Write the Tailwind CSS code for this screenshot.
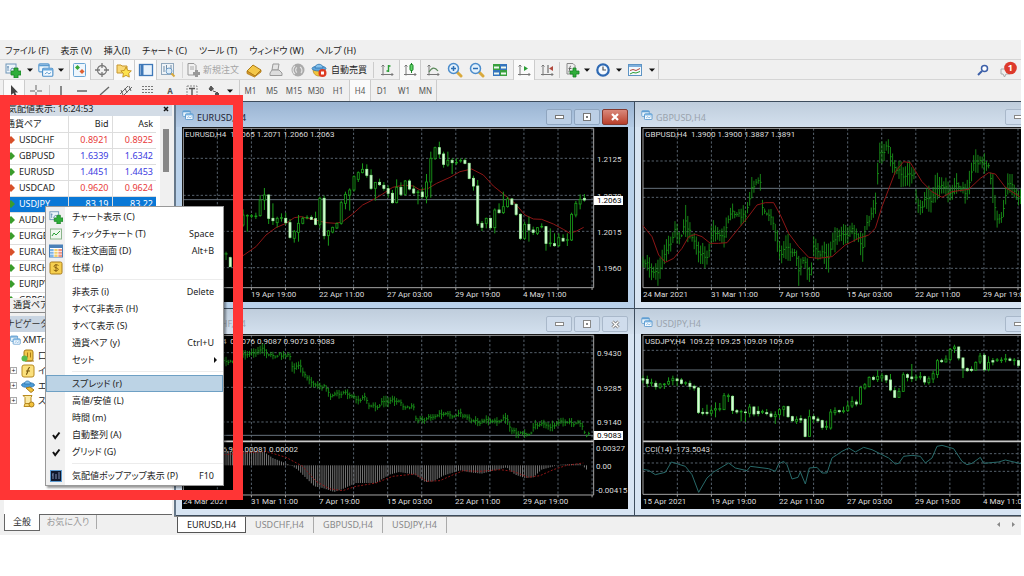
<!DOCTYPE html>
<html lang="ja">
<head>
    <meta charset="UTF-8">
    <meta name="viewport" content="width=device-width, initial-scale=1.0">
    <title>MetaTrader</title>
    <script src="https://cdn.jsdelivr.net/npm/@tailwindcss/browser@4"></script>
</head>
<body class="bg-white font-['Noto_Sans','Noto_Sans_CJK_JP',sans-serif] text-[9px] leading-3 text-[#222] [font-feature-settings:'palt'] overflow-hidden">

    <!-- Shared icons -->
    <svg class="hidden">
        <symbol id="i-win" viewBox="0 0 14 12"><rect x=".7" y=".7" width="9" height="7" rx="1" fill="#eaf5fd" stroke="#5b9bd0"/><path d="M1 2h9" stroke="#5b9bd0" stroke-width="1.5"/><rect x="4" y="4.500" width="9" height="7" rx="1" fill="#f4faff" stroke="#4b8fc8"/><path d="M4 5.700h9" stroke="#6aaade" stroke-width="1.500"/><path d="M6 9.500l2-1.500 1.500 1.500 2-1.500" fill="none" stroke="#5b9bd0" stroke-width=".8"/></symbol>
        <symbol id="i-chartplus" viewBox="0 0 16 16"><rect x="1" y="2" width="10" height="9" fill="#edf5fb" stroke="#6e95b7"/><path d="M3 4v5M2 5h2M5 9l2-3 2 1" fill="none" stroke="#6e95b7"/><path d="M9 6h4v3h3v4h-3v3H9v-3H6V9h3z" fill="#2fae3a" stroke="#188024" stroke-width=".8"/></symbol>
        <symbol id="i-bulb" viewBox="0 0 8 8"><path d="M4 0l4 4-4 4-4-4z"/></symbol>
        <symbol id="i-check" viewBox="0 0 10 10"><path d="M2 5l2.200 3L8.500 2.500" fill="none" stroke="#111" stroke-width="2"/></symbol>
        <symbol id="i-axis" viewBox="0 0 16 16"><path d="M4 3v10.500M2.500 4.500L4 3l1.500 1.500M2 12.500h12M12.500 11l1.500 1.500-1.500 1.500" fill="none" stroke="#777"/></symbol>
        <symbol id="i-down" viewBox="0 0 6 4"><path d="M0 .5h6L3 3.800z" fill="#111"/></symbol>
        <symbol id="i-lens" viewBox="0 0 16 16"><path d="M10 10l4 4" stroke="#d9a93c" stroke-width="3" stroke-linecap="round"/><circle cx="6.500" cy="6.500" r="5" fill="#e3f1fc" stroke="#4b8ccb" stroke-width="1.500"/></symbol>
    </svg>

    <div class="relative mt-10 mr-[3px] bg-[#f0f0f0]">

        <!-- Menu bar -->
        <nav class="flex h-[19px] items-center gap-[12px] pl-[5px] pt-[2px] whitespace-nowrap">
            <button>ファイル (F)</button>
            <button>表示 (V)</button>
            <button>挿入(I)</button>
            <button>チャート (C)</button>
            <button>ツール (T)</button>
            <button>ウィンドウ (W)</button>
            <button>ヘルプ (H)</button>
        </nav>

        <!-- Standard toolbar -->
        <div class="flex h-[21px] items-center border-y border-[#d5d5d5] pl-[2px] whitespace-nowrap">
            <button aria-label="新規チャート" class="flex w-[22px] justify-center"><svg class="size-4"><use href="#i-chartplus"/></svg></button>
            <span class="flex w-[11px] justify-center"><svg class="h-1 w-[6px]"><use href="#i-down"/></svg></span>
            <button aria-label="表示グループ" class="flex w-[22px] justify-center"><svg class="h-[14px] w-4"><use href="#i-win"/></svg></button>
            <span class="mr-[3px] flex w-[8px] justify-center"><svg class="h-1 w-[6px]"><use href="#i-down"/></svg></span>
            <button aria-label="気配値表示" class="flex h-5 w-[22px] items-center justify-center border-x border-[#ccc] bg-[#fafafa] ml-[1px]">
                <svg class="size-4" viewBox="0 0 16 16"><rect x="1.500" y="1.500" width="12" height="13" rx="1" fill="#eef6fc" stroke="#6aa5d4"/><path d="M5.500 3L8 5.500 5.500 8 3 5.500z" fill="#38a838"/><path d="M10 7l2.500 2.500L10 12 7.500 9.500z" fill="#e06030"/></svg>
            </button>
            <button aria-label="データウィンドウ" class="flex w-[22px] justify-center">
                <svg class="size-4" viewBox="0 0 16 16"><circle cx="8" cy="8" r="4.500" fill="none" stroke="#777" stroke-width="1.300"/><path d="M8 1v5M8 10v5M1 8h5M10 8h5" stroke="#777" stroke-width="1.300"/></svg>
            </button>
            <button aria-label="ナビゲーター" class="flex h-5 w-[22px] items-center justify-center border-x border-[#ccc] bg-[#fafafa]">
                <svg class="size-4" viewBox="0 0 16 16"><path d="M1 3h4l1 1h5v7H1z" fill="#f9d978" stroke="#c7962f"/><path d="M10 5l1.700 3.400 3.600.5-2.600 2.500.6 3.700-3.300-1.700-3.200 1.700.6-3.700L4.800 8.900l3.600-.5z" fill="#fde24d" stroke="#c28e1c" stroke-width=".9"/></svg>
            </button>
            <button aria-label="ターミナル" class="flex h-5 w-[22px] items-center justify-center border-r border-[#ccc] bg-[#fafafa]">
                <svg class="size-4" viewBox="0 0 16 16"><rect x="1.500" y="2.500" width="13" height="11" fill="#e9f3fc" stroke="#3e78b8" stroke-width="1.300"/><path d="M4 3v10" stroke="#3e78b8" stroke-width="3"/></svg>
            </button>
            <button aria-label="ストラテジーテスター" class="flex w-[22px] justify-center">
                <svg class="size-4" viewBox="0 0 16 16"><rect x="1.500" y="1.500" width="12" height="11" fill="#eef3f7" stroke="#91a8bd"/><path d="M4 4v6M6.500 3v5M11 3v4" stroke="#6f8ba6"/><path d="M11 11l3.500 3.500" stroke="#d9a93c" stroke-width="2"/><circle cx="9" cy="9" r="3" fill="#dcecf8" stroke="#6f9cc6"/></svg>
            </button>
            <button disabled class="ml-[3px] flex w-[61px] items-center border-l border-[#d5d5d5] pl-[2px] text-[#a5a5a5]">
                <svg class="mr-[2px] size-4" viewBox="0 0 16 16"><path d="M3 1.500h6l2 2V13H3z" fill="#f1f1f1" stroke="#999"/><path d="M5 5h4M5 7h4" stroke="#aaa"/><path d="M10 8h3v2h2v3h-2v2h-3v-2H8v-3h2z" fill="#999"/></svg>
                新規注文
            </button>
            <button aria-label="メタエディター" class="flex w-[22px] justify-center">
                <svg class="size-4" viewBox="0 0 16 16"><path d="M1 9l6-6 8 5-6 6z" fill="#f3c749" stroke="#ad7a14"/><path d="M1 9v2.500L8.500 15 15 10V8l-6 6z" fill="#d8982a" stroke="#ad7a14" stroke-width=".8"/></svg>
            </button>
            <button aria-label="アカウント" class="flex w-[22px] justify-center">
                <svg class="size-4" viewBox="0 0 16 16"><path d="M5 2h6l-1 6H4z" fill="#e5e5e5" stroke="#999"/><path d="M2 13.500V11l2-3h7l3 3v2.500z" fill="#ddd" stroke="#999"/></svg>
            </button>
            <button aria-label="シグナル" class="flex w-[22px] justify-center">
                <svg class="size-4" viewBox="0 0 16 16"><circle cx="8" cy="8" r="6.500" fill="#aaa"/><path d="M5 12a5 5 0 010-8M7 10.500a3 3 0 010-5M10 5a4 4 0 011 6" fill="none" stroke="#e5e5e5" stroke-width="1.200"/></svg>
            </button>
            <button class="flex w-[63px] items-center">
                <svg class="ml-[2px] mr-[4px] size-4 shrink-0" viewBox="0 0 16 16"><path d="M2 7c0 5 3 7 6 7s6-3 6-7z" fill="#f1c53c" stroke="#b98c1d" stroke-width=".8"/><ellipse cx="8" cy="6.500" rx="7" ry="2.500" fill="#5ea6dc" stroke="#2f74ae" stroke-width=".8"/><path d="M4 6c0-5 8-5 8 0z" fill="#84c1ec" stroke="#2f74ae" stroke-width=".8"/><circle cx="11.500" cy="11" r="4" fill="#dd3a22"/><rect x="10" y="9.500" width="3" height="3" fill="#fff"/></svg>
                自動売買
            </button>
            <button aria-label="バーチャート" class="ml-[1px] flex w-[26px] justify-center border-l border-[#ccc]">
                <svg class="size-4" viewBox="0 0 16 16"><use href="#i-axis"/><path d="M9.500 3v7M9.500 4h2M7.500 9h2" stroke="#2a9e35" stroke-width="1.400"/></svg>
            </button>
            <button aria-label="ローソク足" class="flex h-5 w-[22px] items-center justify-center border-x border-[#ccc] bg-[#fafafa]">
                <svg class="size-4" viewBox="0 0 16 16"><use href="#i-axis"/><path d="M9.500 1v10" stroke="#178524"/><rect x="8" y="2.500" width="3" height="6" rx="1" fill="#62d56a" stroke="#178524"/></svg>
            </button>
            <button aria-label="ラインチャート" class="flex w-[23px] justify-center">
                <svg class="size-4" viewBox="0 0 16 16"><use href="#i-axis"/><path d="M4 10c3-5 6-5 9-1" fill="none" stroke="#5c8a5c" stroke-width="1.200"/></svg>
            </button>
            <button aria-label="拡大" class="flex w-[22px] justify-center">
                <svg class="size-4" viewBox="0 0 16 16"><use href="#i-lens"/><path d="M4 6.500h5M6.500 4v5" stroke="#2c6fb4" stroke-width="1.500"/></svg>
            </button>
            <button aria-label="縮小" class="flex w-[22px] justify-center">
                <svg class="size-4" viewBox="0 0 16 16"><use href="#i-lens"/><path d="M4 6.500h5" stroke="#2c6fb4" stroke-width="1.500"/></svg>
            </button>
            <button aria-label="ウィンドウの整列" class="flex w-[23px] justify-center">
                <svg class="size-4" viewBox="0 0 16 16"><rect x="1" y="2" width="7" height="6" fill="#38a03e"/><rect x="8" y="2" width="7" height="6" fill="#3474bd"/><rect x="1" y="8" width="7" height="6" fill="#3474bd"/><rect x="8" y="8" width="7" height="6" fill="#38a03e"/><path d="M2 4.500h5v2H2zM9 4.500h5v2H9zM2 10.500h5v2H2zM9 10.500h5v2H9z" fill="#eef7ee"/></svg>
            </button>
            <button aria-label="自動スクロール" class="ml-[2px] flex h-5 w-[22px] items-center justify-center border-x border-[#ccc] bg-[#fafafa]">
                <svg class="size-4" viewBox="0 0 16 16"><use href="#i-axis"/><path d="M8 4l4 2.500L8 9z" fill="#2a9e35"/></svg>
            </button>
            <button aria-label="チャートシフト" class="flex w-[24px] justify-center">
                <svg class="size-4" viewBox="0 0 16 16"><use href="#i-axis"/><path d="M9 3v8" stroke="#555"/><path d="M14 4v5l-4-2.500z" fill="#b0483c"/></svg>
            </button>
            <button aria-label="インディケータ" class="flex w-[24px] justify-center border-l border-[#ccc]">
                <svg class="size-4" viewBox="0 0 16 16"><path d="M3 1.500h6l2 2V12H3z" fill="#eee" stroke="#888"/><path d="M7 4c-2 0-1 6-2.500 6M4.500 6.500h3" fill="none" stroke="#666"/><path d="M9 6h3v3h3v3h-3v3H9v-3H6V9h3z" fill="#2fae3a" stroke="#188024" stroke-width=".8"/></svg>
            </button>
            <span class="flex w-[8px] justify-center"><svg class="h-1 w-[6px]"><use href="#i-down"/></svg></span>
            <button aria-label="時間足" class="flex w-[24px] justify-center">
                <svg class="size-4" viewBox="0 0 16 16"><circle cx="8" cy="8" r="5.700" fill="#f5faff" stroke="#2e69b3" stroke-width="2.200"/><path d="M8 4.500V8h3" fill="none" stroke="#555" stroke-width="1.200"/></svg>
            </button>
            <span class="flex w-[8px] justify-center"><svg class="h-1 w-[6px]"><use href="#i-down"/></svg></span>
            <button aria-label="テンプレート" class="flex w-[24px] justify-center">
                <svg class="size-4" viewBox="0 0 16 16"><rect x="1.500" y="2.500" width="13" height="11" fill="#f4f9fd" stroke="#5d93c4"/><path d="M2 4h12" stroke="#7fb0dc" stroke-width="2"/><path d="M3 8.500l3-1 3 1 4-2" fill="none" stroke="#b0483c"/><path d="M3 12l3-1.500 3 .5 4-1.500" fill="none" stroke="#2a9e35"/></svg>
            </button>
            <span class="flex h-full w-[12px] items-center border-r border-[#ccc] pl-[2px]"><svg class="h-1 w-[6px]"><use href="#i-down"/></svg></span>
            <button aria-label="検索" class="ml-auto flex">
                <svg class="size-3" viewBox="0 0 12 12"><path d="M5 7l-4 4" stroke="#3c5fa8" stroke-width="2"/><circle cx="7.500" cy="4.500" r="3" fill="#fff" stroke="#3c5fa8" stroke-width="1.500"/></svg>
            </button>
            <button aria-label="通知" class="relative ml-[9px] mr-[4px] flex">
                <svg class="h-[18px] w-[19px]" viewBox="0 0 19 18"><path d="M3 8h9v5H8l-1.500 3L5 13H3z" fill="#eee" stroke="#aaa"/><circle cx="12.500" cy="7" r="6.300" fill="#dd3a2c"/></svg>
                <span class="absolute right-[4px] top-[1px] text-[9px] font-bold text-white">1</span>
            </button>
        </div>

        <!-- Line studies and periods -->
        <div class="flex h-[21px] items-center pl-[3px] font-['Noto_Sans'] text-[8px] text-[#555]">
            <button aria-label="カーソル" class="flex h-full w-[22px] items-center justify-center border-x border-[#ccc] bg-[#fafafa]"><svg class="size-3" viewBox="0 0 12 12"><path d="M3 0v10l2.500-2L7 12l2-1-2-3.500h3z" fill="#444"/></svg></button>
            <button aria-label="クロスヘア" class="flex w-[22px] justify-center"><svg class="size-3" viewBox="0 0 12 12"><path d="M6 0v5M6 7v5M0 6h5M7 6h5" stroke="#666"/></svg></button>
            <button aria-label="垂直線" class="ml-[2px] flex w-[22px] justify-center border-l border-[#ccc]"><svg class="size-3" viewBox="0 0 12 12"><path d="M6 1v10" stroke="#666" stroke-width="1.500"/></svg></button>
            <button aria-label="水平線" class="flex w-[22px] justify-center"><svg class="size-3" viewBox="0 0 12 12"><path d="M1 6h10" stroke="#666" stroke-width="1.500"/></svg></button>
            <button aria-label="トレンドライン" class="flex w-[22px] justify-center"><svg class="size-3" viewBox="0 0 12 12"><path d="M2 10l9-8" stroke="#666" stroke-width="1.300"/></svg></button>
            <button aria-label="チャネル" class="flex w-[22px] justify-center"><svg class="size-3" viewBox="0 0 12 12"><path d="M0 9l8-8M3 11l9-9M1 5l2 5M5 3l2 5M9 1l2 5" stroke="#666"/></svg></button>
            <button aria-label="フィボナッチ" class="flex w-[22px] justify-center"><svg class="size-3" viewBox="0 0 12 12"><path d="M0 1.500h12M0 4.500h12M0 7.500h12M0 10.500h12" stroke="#777" stroke-dasharray="2 1"/></svg></button>
            <button class="w-[22px] font-bold">A</button>
            <button aria-label="ラベル" class="flex w-[22px] justify-center"><svg class="size-3" viewBox="0 0 12 12"><rect x="1" y="1" width="10" height="10" fill="none" stroke="#888" stroke-dasharray="2 1"/><path d="M3 3.500h6M6 3.500V10" stroke="#555" stroke-width="1.400"/></svg></button>
            <button aria-label="矢印" class="flex w-[22px] justify-center"><svg class="size-3" viewBox="0 0 12 12"><path d="M3 1l2.500 3L3 6 1 4zM9 7l2 2-2 2-2-2zM5 6l3 1" fill="#555" stroke="#555"/></svg></button>
            <span class="flex w-[9px] justify-center"><svg class="h-1 w-[6px]"><use href="#i-down"/></svg></span>
            <button class="ml-[5px] h-full w-[22px] border-l border-[#ccc]">M1</button>
            <button class="w-[22px]">M5</button>
            <button class="w-[22px]">M15</button>
            <button class="w-[22px]">M30</button>
            <button class="w-[22px]">H1</button>
            <button class="h-full w-[22px] border-x border-[#ccc] bg-[#fafafa]">H4</button>
            <button class="w-[22px]">D1</button>
            <button class="w-[22px]">W1</button>
            <button class="h-full w-[22px] border-r border-[#ccc]">MN</button>
        </div>

        <div class="flex">
            <!-- Left column -->
            <aside class="ml-[4px] flex w-[168px] shrink-0 flex-col">
                <div class="flex h-[15px] items-center justify-between bg-[#d3dce6] pl-[4px] pr-[3px]">
                    <span>気配値表示: 16:24:53</span>
                    <button aria-label="閉じる" class="flex"><svg class="size-[6px]" viewBox="0 0 6 6"><path d="M1 1l4 4M5 1L1 5" stroke="#111" stroke-width="1.500"/></svg></button>
                </div>
                <div class="flex h-[182px] overflow-hidden bg-white">
                    <table class="w-[152px] table-fixed self-start border-collapse text-right">
                        <colgroup><col class="w-[64px]"><col class="w-[44px]"><col class="w-[44px]"></colgroup>
                        <thead>
                            <tr class="h-4 border-b border-[#ddd]"><th class="border-r border-[#ddd] pl-[2px] text-left font-normal">通貨ペア</th><th class="border-r border-[#ddd] pr-[3px] font-normal">Bid</th><th class="pr-[3px] font-normal">Ask</th></tr>
                        </thead>
                        <tbody id="quotes"></tbody>
                    </table>
                    <div class="ml-auto w-[12px] bg-[#f0f0f0] px-[3px] pt-[13px]"><div class="h-[43px] w-[6px] bg-[#888]"></div></div>
                </div>
                <div class="flex h-[15px] items-center border-b border-[#888] pl-[9px]"><button>通貨ペア</button></div>
                <div class="mt-[3px] flex h-4 items-center bg-[#c9d5e2] pl-[2px] text-[#333]">ナビゲーター</div>
                <ul class="grow bg-white pl-[6px]">
                    <li class="flex h-4 items-center"><svg class="mr-[2px] h-3 w-[11px]" viewBox="0 0 14 12"><use href="#i-win"/></svg>XMTrading</li>
                    <li class="flex h-[15px] items-center pl-[11px]"><svg class="mr-[3px] size-[14px]" viewBox="0 0 14 14"><rect x="3" y="1" width="9" height="11" rx="2" fill="#f2c84c" stroke="#a87a18"/><path d="M6.500 3.500v5M9.500 3.500v5M4 12h9" stroke="#a87a18"/><circle cx="3.500" cy="9.500" r="3" fill="#57bb4e"/></svg>口座</li>
                    <li class="flex h-[15px] items-center"><span class="mr-[2px] flex h-[7px] w-[7px] items-center justify-center border border-[#aaa] text-[7px]">+</span><svg class="ml-[2px] mr-[3px] size-[14px]" viewBox="0 0 14 14"><rect x="1" y="1" width="12" height="12" rx="2" fill="#fbe07c" stroke="#b88a20"/><path d="M9 3.500C6 3 7.500 10 5 10.500M5 7h4" fill="none" stroke="#7a5a10" stroke-width="1.200"/></svg>インディケータ</li>
                    <li class="flex h-[15px] items-center"><span class="mr-[2px] flex h-[7px] w-[7px] items-center justify-center border border-[#aaa] text-[7px]">+</span><svg class="ml-[2px] mr-[3px] size-[14px]" viewBox="0 0 14 14"><ellipse cx="7" cy="6" rx="6.500" ry="2.500" fill="#4b9bd6" stroke="#2f74ae" stroke-width=".8"/><path d="M3.500 5c0-4 6-4 6 0z" fill="#7fbdea" stroke="#2f74ae" stroke-width=".8"/><path d="M5 9l4-1 4 3-3 2.500z" fill="#f2c23c" stroke="#a87a18"/></svg>エキスパート</li>
                    <li class="flex h-[15px] items-center"><span class="mr-[2px] flex h-[7px] w-[7px] items-center justify-center border border-[#aaa] text-[7px]">+</span><svg class="ml-[2px] mr-[3px] size-[14px]" viewBox="0 0 14 14"><path d="M2 1.500h9l-1 2v6H4v-6z" fill="#fbe9a4" stroke="#b88a20"/><path d="M4 9.500h5v3H3z" fill="#f6d56c" stroke="#b88a20"/><circle cx="10.500" cy="10.500" r="2.500" fill="#f2c23c" stroke="#a87a18"/></svg>スクリプト</li>
                </ul>
                <div class="flex h-[21px] items-start">
                    <button class="h-[17px] w-[36px] border-x border-b border-[#666] bg-white">全般</button>
                    <div class="h-[17px] grow border-t border-[#666]"><button class="h-[14px] w-[57px] border-r border-[#aaa] text-[#999]">お気に入り</button></div>
                </div>
            </aside>

            <!-- Chart workspace -->
            <main class="ml-[2px] min-w-0 grow overflow-hidden">
                <div class="grid grid-cols-[459px_459px] border-l-2 border-[#66788a] font-['Roboto']">
                    <section class="border-t border-r border-[#3d4c5c] bg-[#b9d1ea] px-[6px] pb-[6px]">
                        <header class="-mx-[6px] flex h-[25px] items-center bg-linear-to-b from-[#9ab4d2] to-[#b4cbe5] px-[6px] font-['Noto_Sans'] text-[9px] text-[#223]">
                            <svg class="mr-[3px] h-[10px] w-3"><use href="#i-win"/></svg><span class="pt-[6px]">EURUSD,H4</span>
                            <div class="ml-auto flex gap-[2px] pt-[5px]">
                                <button aria-label="最小化" class="flex h-4 w-[26px] items-center justify-center rounded-xs border border-[#8fa5bf] bg-[#bccfe5]"><span class="h-[4px] w-[9px] border border-[#777] bg-white"></span></button>
                                <button aria-label="最大化" class="flex h-4 w-[26px] items-center justify-center rounded-xs border border-[#8fa5bf] bg-[#bccfe5]"><span class="size-[8px] border border-[#777] bg-white p-[2px]"><span class="block size-[2px] bg-[#777]"></span></span></button>
                                <button aria-label="閉じる" class="flex h-4 w-[26px] items-center justify-center rounded-xs border border-[#83392f] bg-linear-to-b from-[#d9887a] to-[#b93e2a]"><svg class="size-[8px]" viewBox="0 0 8 8"><path d="M1 1l6 6M7 1L1 7" stroke="#fff" stroke-width="2.200"/></svg></button>
                            </div>
                        </header>
                        <svg class="block h-[175px] w-full bg-black fill-[#dcdcdc] text-[8px]">
                            <g id="eurusd" transform="scale(.33333) translate(-18 -81)"></g>
                            <text x="3" y="10">EURUSD,H4&nbsp; 1.2065 1.2071 1.2060 1.2063</text>
                            <text x="415" y="35">1.2125</text><text x="415" y="72">1.2070</text><text x="415" y="108">1.2015</text><text x="415" y="144">1.1960</text>
                            <rect x="412" y="69" width="29" height="9" fill="#fff"/><text x="415" y="76" fill="#000">1.2063</text>
                            <text x="69" y="170">19 Apr 19:00</text><text x="137" y="170">22 Apr 11:00</text><text x="205" y="170">27 Apr 03:00</text><text x="273" y="170">29 Apr 19:00</text><text x="341" y="170">4 May 11:00</text>
                        </svg>
                    </section>
                    <section class="border-t border-r border-[#3d4c5c] bg-[#d7e4f2] px-[6px] pb-[6px]">
                        <header class="-mx-[6px] flex h-[25px] items-center bg-linear-to-b from-[#bfcddc] to-[#d3e0ee] px-[6px] font-['Noto_Sans'] text-[9px] text-[#9aa3ad]">
                            <svg class="mr-[3px] h-[10px] w-3"><use href="#i-win"/></svg><span class="pt-[6px]">GBPUSD,H4</span>
                            <div class="ml-auto flex gap-[2px] pt-[5px]">
                                <button aria-label="最小化" class="flex h-4 w-[26px] items-center justify-center rounded-xs border border-[#a9b8ca] bg-[#cfdcec]"><span class="h-[4px] w-[9px] border border-[#888] bg-white"></span></button>
                                <button aria-label="最大化" class="flex h-4 w-[26px] items-center justify-center rounded-xs border border-[#a9b8ca] bg-[#cfdcec]"><span class="size-[8px] border border-[#888] bg-white"></span></button>
                                <button aria-label="閉じる" class="flex h-4 w-[26px] items-center justify-center rounded-xs border border-[#a9b8ca] bg-[#cfdcec]"></button>
                            </div>
                        </header>
                        <svg class="block h-[175px] w-full bg-black fill-[#dcdcdc] text-[8px]">
                            <g id="gbpusd" transform="scale(.33333) translate(-27 -81)"></g>
                            <text x="4" y="10">GBPUSD,H4&nbsp; 1.3900 1.3900 1.3887 1.3891</text>
                            <text x="2" y="170">24 Mar 2021</text><text x="70" y="170">31 Mar 11:00</text><text x="138" y="170">7 Apr 19:00</text><text x="206" y="170">15 Apr 03:00</text><text x="274" y="170">22 Apr 11:00</text><text x="342" y="170">29 Apr 19:00</text>
                        </svg>
                    </section>
                    <section class="border-y border-r border-[#3d4c5c] bg-[#d7e4f2] px-[6px] pb-[6px]">
                        <header class="-mx-[6px] flex h-[25px] items-center bg-linear-to-b from-[#bfcddc] to-[#d3e0ee] px-[6px] font-['Noto_Sans'] text-[9px] text-[#9aa3ad]">
                            <svg class="mr-[3px] h-[10px] w-3"><use href="#i-win"/></svg><span class="pt-[4px]">USDCHF,H4</span>
                            <div class="ml-auto flex gap-[2px] pt-[5px]">
                                <button aria-label="最小化" class="flex h-4 w-[26px] items-center justify-center rounded-xs border border-[#a9b8ca] bg-[#cfdcec]"><span class="h-[4px] w-[9px] border border-[#888] bg-white"></span></button>
                                <button aria-label="最大化" class="flex h-4 w-[26px] items-center justify-center rounded-xs border border-[#a9b8ca] bg-[#cfdcec]"><span class="size-[8px] border border-[#888] bg-white p-[2px]"><span class="block size-[2px] bg-[#888]"></span></span></button>
                                <button aria-label="閉じる" class="flex h-4 w-[26px] items-center justify-center rounded-xs border border-[#a9b8ca] bg-[#cfdcec]"><svg class="size-[9px]" viewBox="0 0 9 9"><path d="M1.500 1.500l6 6M7.500 1.500l-6 6" stroke="#777" stroke-width="3"/><path d="M1.500 1.500l6 6M7.500 1.500l-6 6" stroke="#fff" stroke-width="1.400"/></svg></button>
                            </div>
                        </header>
                        <svg class="block h-[175px] w-full bg-black fill-[#dcdcdc] text-[8px]">
                            <g id="usdchf" transform="scale(.33333) translate(-18 -78)"></g>
                            <text x="3" y="10">USDCHF,H4&nbsp; 0.9076 0.9087 0.9073 0.9083</text>
                            <text x="116" y="118" text-anchor="end">MACD(12,26,9) 0.00081 0.00002</text>
                            <text x="415" y="22">0.9430</text><text x="415" y="57">0.9285</text><text x="415" y="91">0.9140</text>
                            <rect x="412" y="97" width="29" height="9" fill="#fff"/><text x="415" y="104" fill="#000">0.9083</text>
                            <text x="414" y="117">0.00327</text><text x="414" y="135">0.00</text><text x="414" y="159">-0.00415</text>
                            <text x="1" y="170">24 Mar 2021</text><text x="69" y="170">31 Mar 11:00</text><text x="137" y="170">7 Apr 19:00</text><text x="205" y="170">15 Apr 03:00</text><text x="273" y="170">22 Apr 11:00</text><text x="341" y="170">29 Apr 19:00</text>
                        </svg>
                    </section>
                    <section class="border-y border-r border-[#3d4c5c] bg-[#d7e4f2] px-[6px] pb-[6px]">
                        <header class="-mx-[6px] flex h-[25px] items-center bg-linear-to-b from-[#bfcddc] to-[#d3e0ee] px-[6px] font-['Noto_Sans'] text-[9px] text-[#9aa3ad]">
                            <svg class="mr-[3px] h-[10px] w-3"><use href="#i-win"/></svg><span class="pt-[4px]">USDJPY,H4</span>
                            <div class="ml-auto flex gap-[2px] pt-[5px]">
                                <button aria-label="最小化" class="flex h-4 w-[26px] items-center justify-center rounded-xs border border-[#a9b8ca] bg-[#cfdcec]"><span class="h-[4px] w-[9px] border border-[#888] bg-white"></span></button>
                                <button aria-label="最大化" class="flex h-4 w-[26px] items-center justify-center rounded-xs border border-[#a9b8ca] bg-[#cfdcec]"><span class="size-[8px] border border-[#888] bg-white"></span></button>
                                <button aria-label="閉じる" class="flex h-4 w-[26px] items-center justify-center rounded-xs border border-[#a9b8ca] bg-[#cfdcec]"></button>
                            </div>
                        </header>
                        <svg class="block h-[175px] w-full bg-black fill-[#dcdcdc] text-[8px]">
                            <g id="usdjpy" transform="scale(.33333) translate(-27 -78)"></g>
                            <text x="4" y="10">USDJPY,H4&nbsp; 109.22 109.25 109.09 109.09</text>
                            <text x="4" y="118">CCI(14) -173.5043</text>
                            <text x="2" y="170">15 Apr 2021</text><text x="70" y="170">19 Apr 19:00</text><text x="138" y="170">22 Apr 11:00</text><text x="206" y="170">27 Apr 03:00</text><text x="274" y="170">29 Apr 19:00</text><text x="342" y="170">4 May 11:00</text>
                        </svg>
                    </section>
                </div>
                <!-- Chart tabs -->
                <div class="flex h-[19px] items-start border-t border-[#888] pl-[3px] text-[#888]">
                    <button class="h-4 w-[69px] border-x border-b border-[#555] bg-white text-[#222]">EURUSD,H4</button>
                    <button class="h-4 w-[68px] border-r border-[#aaa]">USDCHF,H4</button>
                    <button class="h-4 w-[69px] border-r border-[#aaa]">GBPUSD,H4</button>
                    <button class="h-4 w-[64px] border-r border-[#aaa]">USDJPY,H4</button>
                    <span class="ml-auto flex gap-[12px] pr-[6px] pt-[5px]">
                        <button aria-label="前へ"><svg class="h-[5px] w-[3px]" viewBox="0 0 3 5"><path d="M3 0v5L0 2.500z" fill="#888"/></svg></button>
                        <button aria-label="次へ"><svg class="h-[5px] w-[3px]" viewBox="0 0 3 5"><path d="M0 0v5l3-2.500z" fill="#888"/></svg></button>
                    </span>
                </div>
            </main>
        </div>

        <!-- Context menu -->
        <div class="absolute left-[45px] top-[166px] w-[179px] border border-[#999] bg-linear-to-r from-[#f0f0f0] from-[19px] to-white to-[19px] py-px shadow-[2px_2px_2px_#0006]">
            <ul id="menu"></ul>
        </div>

        <!-- Highlight frame -->
        <div class="pointer-events-none absolute left-0 top-[55px] h-[405px] w-[243px] border-10 border-[#ff3535]"></div>
    </div>

    <script>
        // Market watch
        const quotes = [
            ['USDCHF', '0.8921', '0.8925', 0], ['GBPUSD', '1.6339', '1.6342', 1], ['EURUSD', '1.4451', '1.4453', 1],
            ['USDCAD', '0.9620', '0.9624', 0], ['USDJPY', '83.19', '83.22', 1], ['AUDUSD', '1.0473', '1.0476', 1],
            ['EURGBP', '0.8843', '0.8846', 1], ['EURAUD', '1.3796', '1.3801', 0], ['EURCHF', '1.2893', '1.2897', 1],
            ['EURJPY', '120.23', '120.27', 1], ['GBPCHF', '1.4578', '1.4584', 1]
        ];
        document.getElementById('quotes').innerHTML = quotes.map(([name, bid, ask, up]) => {
            const selected = name === 'USDJPY';
            const price = selected ? 'text-white' : up ? 'text-[#3a3ae0]' : 'text-[#e83a3a]';
            const row = selected ? 'bg-[#0a78d6] text-white' : '';
            return `<tr class="h-4 border-b border-[#ddd] ${row}">
                <td class="border-r border-[#ddd] text-left"><span class="flex items-center pl-[3px]"><svg class="mr-[4px] size-2 ${up ? 'fill-[#3a9c2c]' : 'fill-[#d8502a]'}"><use href="#i-bulb"/></svg>${name}</span></td>
                <td class="border-r border-[#ddd] pr-[3px] ${price}">${bid}</td><td class="pr-[3px] ${price}">${ask}</td></tr>`;
        }).join('');

        // Context menu
        const icons = {
            chart: '<svg class="size-[14px]"><use href="#i-chartplus"/></svg>',
            tick: '<svg class="size-3" viewBox="0 0 12 12"><rect x=".5" y="1" width="11" height="10" fill="#eef7ee" stroke="#8ab48a"/><path d="M2 8l2-3 2 2 4-4" fill="none" stroke="#2a9e35"/></svg>',
            depth: '<svg class="size-[14px]" viewBox="0 0 14 14"><rect x=".5" y="1" width="13" height="12" fill="#fff" stroke="#4a80b8"/><path d="M1 2.500h12" stroke="#4a80b8" stroke-width="3"/><path d="M1 5h4v8H1z" fill="#7fb4e6"/><path d="M5 5h4v8H5z" fill="#f3cf6a"/><path d="M9 5h4v8H9z" fill="#ee9482"/><path d="M1 7.500h12M1 10.200h12M5 5v8M9 5v8" stroke="#fff" stroke-width=".7"/></svg>',
            spec: '<svg class="size-[14px]" viewBox="0 0 14 14"><rect x="1" y="1" width="12" height="12" rx="1.500" fill="#f6cf4f" stroke="#a87a18"/><path d="M9.500 4.500c-1-1-4.500-1-4.500.8s4.300 1.300 4.300 3-3.500 1.700-4.600.7M7 3v8" fill="none" stroke="#8a6110"/></svg>',
            popup: '<svg class="size-3" viewBox="0 0 12 12"><rect x=".5" y=".5" width="11" height="11" fill="#10182c" stroke="#5c9ad0"/><path d="M3 3v6M2 5h1M6 4v5M9 2v7" stroke="#7f8db0"/></svg>',
            check: '<svg class="size-[10px]"><use href="#i-check"/></svg>'
        };
        const submenu = '<svg class="-mr-[3px] h-[6px] w-[3px]" viewBox="0 0 3 6"><path d="M0 0v6l3-3z" fill="#111"/></svg>';
        const items = [
            ['チャート表示 (C)', '', 'chart'], ['ティックチャート (T)', 'Space', 'tick'], ['板注文画面 (D)', 'Alt+B', 'depth'], ['仕様 (p)', '', 'spec'], null,
            ['非表示 (i)', 'Delete'], ['すべて非表示 (H)', ''], ['すべて表示 (S)', ''], ['通貨ペア (y)', 'Ctrl+U'], ['セット', submenu], null,
            ['スプレッド (r)', ''], ['高値/安値 (L)', ''], ['時間 (m)', ''], ['自動整列 (A)', '', 'check'], ['グリッド (G)', '', 'check'], null,
            ['気配値ポップアップ表示 (P)', 'F10', 'popup']
        ];
        document.getElementById('menu').innerHTML = items.map(item => {
            if (!item) return '<li class="ml-[26px] flex h-[7px] items-center"><span class="h-px grow bg-[#ececec]"></span></li>';
            const [label, key, icon] = item;
            const active = label.startsWith('スプレッド') ? 'border-[#6ea0c4] bg-[#bcd3e5]' : 'border-transparent';
            return `<li><button class="flex h-[17px] w-full items-center border pr-[8px] whitespace-nowrap ${active}">
                <span class="mr-[7px] flex w-[18px] shrink-0 justify-center">${icons[icon] || ''}</span>${label}
                <span class="ml-auto">${key}</span></button></li>`;
        }).join('');

        // Charts: plot units are thirds of a pixel
        const GREEN = '#1a9e1a';
        const RED = '#8e1616';
        const line = (x1, y1, x2, y2, stroke, extra = '') =>
            `<path d="M${x1} ${y1}L${x2} ${y2}" stroke="${stroke}" stroke-width="3" ${extra}/>`;
        const curve = (points, stroke, extra = '') =>
            `<polyline points="${points}" fill="none" stroke="${stroke}" stroke-width="3" ${extra}/>`;

        function frame({ left, right, top, bottom, firstX, rows, price, split }) {
            const dash = 'stroke-dasharray="7 6"';
            let out = '';
            for (let x = firstX; x < right; x += 102.2) out += line(x, top, x, bottom, '#56616c', dash);
            rows.forEach(y => out += line(left, y, right, y, '#56616c', dash));
            out += line(left, price, right, price, '#66717c');
            if (split) out += line(left, split, right, split, '#c8c8c8', 'style="stroke-width:5"');
            out += `<path d="M${left} ${top}H${right}V${bottom}H${left}z" fill="none" stroke="#a5a5a5" stroke-width="3"/>`;
            for (let x = firstX; x < right; x += 102.2) out += line(x, bottom, x, bottom + 7, '#a5a5a5');
            return out;
        }

        // "high,bodyTop,bodyBottom,low" with a trailing f for a filled body
        function candles(data, x0) {
            return data.trim().split(/\s+/).map((c, i) => {
                if (c === '-') return '';
                const [h, t, b, l] = c.split(',').map(parseFloat);
                const x = x0 + i * 12.8, filled = c.endsWith('f');
                return line(x, h, x, l, GREEN) +
                    `<rect x="${x - 3}" y="${t}" width="6" height="${Math.max(b - t, 2)}" fill="${filled ? '#d8ffd8' : '#000'}" stroke="${filled ? '#a5f0a5' : GREEN}" stroke-width="2.500"/>`;
            }).join('');
        }

        const at = (pts, x) => {
            let i = 1;
            while (i < pts.length - 1 && pts[i][0] < x) i++;
            const a = pts[i - 1], b = pts[i], k = (x - a[0]) / (b[0] - a[0]);
            return a.slice(1).map((v, n) => v + (b[n + 1] - v) * k);
        };
        const parse = text => text.trim().split(/\s+/).map(p => p.split(',').map(Number));
        const noise = n => (Math.sin(n * 127.1) * 43758.5453 % 1);

        function bars(text, jitter) {
            const pts = parse(text);
            let out = '';
            for (let x = pts[0][0], i = 1; x <= pts[pts.length - 1][0]; x += 6.4, i++) {
                const [h, l] = at(pts, x);
                const top = h + noise(i) * jitter, low = Math.max(l + noise(i + 500) * jitter, top + 8);
                out += `<path d="M${x} ${top}V${low}M${x} ${(top + low) / 2}h4" stroke="${GREEN}" stroke-width="2.500"/>`;
            }
            return out;
        }

        document.getElementById('eurusd').innerHTML =
            frame({ left: 22, right: 1253, top: 85, bottom: 563, firstX: 124, rows: [175, 286, 394, 503], price: 299 }) +
            curve('201,467 240,440 270,405 300,383 330,370 355,353 375,350 410,358 450,368 480,370 500,365 530,342 560,315 590,300 620,282 650,262 680,256 712,258 732,270 757,265 782,250 822,232 852,215 887,207 922,225 952,258 982,282 1017,310 1047,345 1072,357 1097,358 1132,372 1162,388 1182,400 1202,393 1223,382', RED) +
            candles(`455,460,463,480 470,473,500,502f - - 328,345,375,380 343,346,348,395 342,347,349,355 338,348,350,357 285,300,347,350 264,285,300,330
                283,285,355,372f 310,355,362,375f 350,355,368,382 340,353,355,365 338,355,368,375f 357,368,412,416f 390,395,415,428 345,370,397,425 350,355,370,373 346,352,354,358
                346,352,358,360f 335,356,373,376f 290,295,373,385 287,295,407,418f 390,393,407,437 380,382,396,400 368,370,384,387 302,308,370,374 275,283,310,328 265,270,285,332
                226,230,270,275 214,218,238,246 190,208,218,220 193,208,226,233f 208,226,265,270f 246,247,265,302 236,247,254,258f 246,256,265,272f 256,266,280,293f 270,280,308,311f
                238,262,308,310 247,262,283,288f 240,243,283,287 238,243,267,271f 257,267,279,283f 270,276,278,313 262,276,290,296f 222,246,291,310 155,175,246,293 140,143,175,180
                125,143,162,175f 155,162,193,203f 155,181,195,200 175,181,188,222f 175,187,189,195 175,181,183,188 175,181,190,193f 188,190,235,238f 227,235,258,272f 240,258,370,377f
                363,370,382,393f 353,355,370,385 353,355,383,388f 325,330,383,400 310,330,338,341f 275,320,338,342 290,297,320,323 294,297,313,316f 310,313,343,348f 340,343,415,420f
                365,373,415,420 350,373,390,425f 380,390,397,405f 381,383,400,405 370,379,381,385 378,380,430,452f 385,429,431,440 400,431,437,440f 400,413,437,441 403,415,423,425f
                400,419,421,438 338,343,420,423 303,310,345,352 283,298,312,328 282,295,300,305f`, 150);

        document.getElementById('gbpusd').innerHTML =
            frame({ left: 33, right: 1330, top: 85, bottom: 563, firstX: 136, rows: [183, 292, 395, 505], price: 265 }) +
            bars(`33,465,515 50,470,520 70,500,540 78,490,548 90,450,515 110,415,460 128,370,425 150,395,425 160,322,400 168,345,425 185,405,435 205,430,500 228,450,490 238,380,440
                245,368,415 265,390,430 275,390,445 285,340,395 303,317,345 320,335,365 340,320,362 352,290,325 360,235,290 365,238,265 385,232,265 388,270,330 400,330,358 420,330,365 432,370,445
                440,430,475 465,410,480 490,450,480 500,470,548 510,462,500 537,495,550 543,415,480 560,440,468 588,430,515 600,410,460 618,375,430 640,385,425 657,370,415 675,385,420
                691,410,488 705,340,400 720,330,360 732,260,330 740,140,210 765,115,155 780,160,215 795,195,230 820,195,268 845,195,235 852,260,320 862,320,348 880,265,325 895,265,335
                920,220,290 940,245,290 962,250,305 975,225,265 1003,270,303 1015,190,260 1030,160,205 1070,180,210 1082,230,300 1092,320,375 1110,340,380 1125,215,285 1140,235,280
                1163,270,325 1250,260,310`, 14) +
            curve('33,377 60,410 80,465 100,487 125,475 150,445 170,410 190,403 210,410 235,430 260,430 285,428 320,385 345,355 375,315 400,308 425,308 445,345 470,400 500,440 530,472 560,475 600,470 640,435 680,415 710,405 730,385 750,320 790,215 815,185 835,188 870,245 900,275 930,292 960,275 1010,268 1045,235 1070,218 1090,222 1120,262 1163,290', RED);

        const macd = parse(`22,432 240,430 265,432 290,450 320,462 345,472 365,485 390,510 415,535 440,540 475,552 500,543 540,525 600,525 640,500 670,492 717,500 747,522 772,520 802,503
            852,487 882,493 917,497 952,488 992,478 1017,500 1047,510 1072,508 1097,485 1122,478 1152,470 1212,467 1222,475 1237,490`);
        let histogram = '';
        for (let x = 22; x <= 1237; x += 6.4) histogram += line(x, 472, x, at(macd, x)[0], '#777');
        document.getElementById('usdchf').innerHTML =
            frame({ left: 22, right: 1253, top: 82, bottom: 561, firstX: 124, rows: [134, 238, 342], price: 382, split: 400 }) +
            histogram +
            curve('22,440 145,440 270,430 330,448 380,475 420,520 460,542 500,548 540,535 600,525 650,505 718,498 752,520 792,518 832,500 862,488 912,490 972,485 1012,490 1057,508 1092,503 1132,485 1172,472 1222,465', RED, 'stroke-dasharray="6 5"') +
            bars(`22,150,172 145,150,172 163,155,168 205,128,150 235,125,145 262,105,140 275,130,150 300,138,150 340,130,148 348,165,190 375,160,190 390,195,222 425,225,245 445,225,240
                462,255,275 495,245,265 525,248,270 540,270,285 568,258,280 580,285,300 608,290,306 615,270,295 650,265,290 672,272,290 682,290,305 714,290,305 722,330,348 747,325,343
                772,320,335 802,308,325 837,320,330 850,305,325 877,322,338 907,335,355 942,325,345 954,335,350 992,320,340 1007,355,380 1022,368,384 1062,372,384 1077,340,360
                1112,335,360 1122,350,372 1147,330,355 1182,335,350 1217,340,355 1227,370,385 1239,378,390`, 7);

        document.getElementById('usdjpy').innerHTML =
            frame({ left: 33, right: 1330, top: 82, bottom: 559, firstX: 136, rows: [127, 235, 342, 437, 465, 490], price: 186, split: 400 }) +
            curve('33,484 50,487 70,500 100,493 118,462 160,475 180,500 200,553 225,510 245,492 290,465 310,480 345,488 355,475 410,482 430,490 440,468 455,460 465,470 480,513 498,508 505,492 520,528 532,480 555,478 570,495 585,495 600,450 630,430 650,420 670,432 695,418 720,425 770,450 790,468 800,466 815,445 840,442 865,445 880,465 900,450 915,415 930,412 965,422 990,460 1005,470 1020,466 1045,448 1055,466 1100,462 1120,456 1180,470', '#286a6a') +
            candles(`203,212,216,226f 203,214,226,238f 212,224,226,235 218,226,236,245f 225,228,238,243 225,228,230,243 208,220,228,232 203,212,218,232 208,213,218,235f 210,216,226,230f
                220,224,226,232 218,226,235,245f 230,235,240,248f 237,240,313,318f 300,313,316,322f 290,313,316,322f 295,307,316,325 283,302,306,328 285,302,304,310 255,263,305,306
                257,263,266,282 262,265,307,318f 303,308,312,318f 305,310,312,340 308,312,314,342f 288,297,316,328 295,297,318,325f 295,310,317,325f 305,310,313,318 303,314,317,322f
                310,318,325,330f 310,320,326,348 300,305,320,330 293,296,304,325 293,296,326,330f 323,326,338,342f 325,334,340,348 322,332,336,345f 330,334,385,388f 305,326,385,386
                320,326,333,345f 326,333,338,342f 335,338,358,365f 338,355,358,366 303,312,360,365 298,308,314,322 305,308,311,316f 296,308,311,316 280,294,308,312 265,280,294,300
                275,282,288,295f 235,238,288,290 225,230,240,245 205,208,236,238 203,208,214,218f 186,205,215,222 195,203,210,222 200,203,216,225f 198,216,246,250f 238,248,268,269f
                240,250,268,270 193,200,250,252 196,200,208,220f 168,207,212,222f 200,207,210,218 192,205,208,215 203,206,222,230f 205,212,224,230 188,197,213,225 153,158,200,210
                152,158,161,165f 142,153,162,163 120,124,155,160 110,117,122,135 116,117,150,157f 148,150,180,210f 178,182,188,192f 175,184,187,192f 160,163,186,188 135,144,162,168
                137,142,185,190f 145,163,185,190 150,158,162,172f 150,155,158,162 148,156,158,165 138,152,155,163 148,153,157,160f 150,156,158,172 155,158,172,176f`, 33);
    </script>
</body>
</html>
